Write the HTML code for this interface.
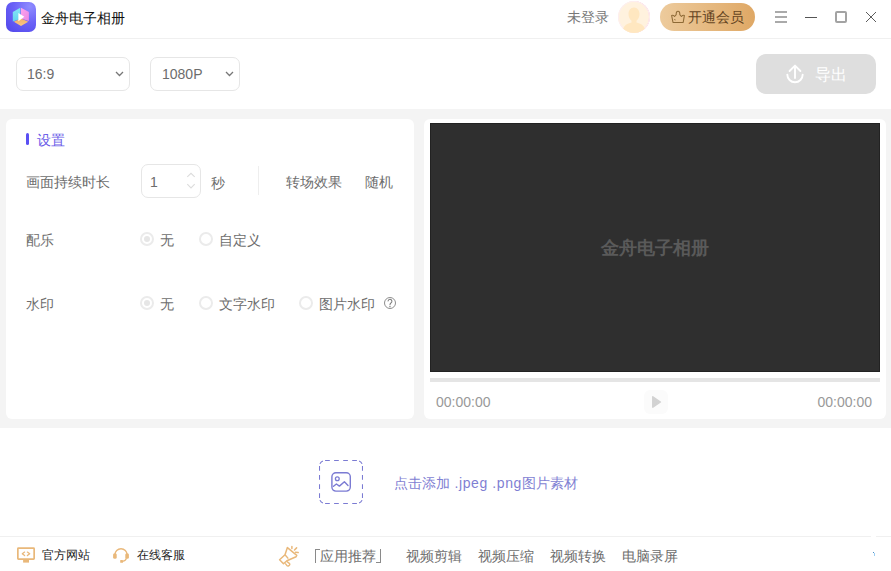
<!DOCTYPE html>
<html><head><meta charset="utf-8">
<style>
*{margin:0;padding:0;box-sizing:border-box}
html,body{width:891px;height:571px;overflow:hidden;background:#fff;font-family:"Liberation Sans",sans-serif;}
.a{position:absolute}
.t{position:absolute;white-space:nowrap;line-height:20px;font-size:14px;color:#6d6d6d}
</style></head><body>
<!-- header -->
<div class="a" style="left:0;top:0;width:891px;height:39px;border-bottom:1px solid #f0f0f0"></div>
<div class="a" style="left:6px;top:2px;width:30px;height:30px;border-radius:7px;background:radial-gradient(circle at 80% 15%,#8f8cff 0%,#6c63f7 45%,#4f45ea 100%)">
<svg width="30" height="30" viewBox="0 0 30 30" style="position:absolute;left:0;top:0">
<defs><linearGradient id="gc" x1="0" y1="0" x2="0" y2="1"><stop offset="0" stop-color="#86e6f6"/><stop offset="1" stop-color="#62d4ee"/></linearGradient>
<linearGradient id="gp" x1="0" y1="0" x2="1" y2="1"><stop offset="0" stop-color="#fca6ee"/><stop offset="1" stop-color="#ea86e4"/></linearGradient>
<linearGradient id="go" x1="0" y1="0" x2="0" y2="1"><stop offset="0" stop-color="#f3b268"/><stop offset="1" stop-color="#f8c585"/></linearGradient></defs>
<polygon points="6.8,10 14.3,5.8 14.3,17 6.8,19.5" fill="url(#gc)"/>
<polygon points="15,5.8 22.9,10 22.9,19 15,16.5" fill="url(#gp)"/>
<polygon points="7.8,19.8 15,16.6 22.3,19.8 15,24" fill="url(#go)"/>
<polygon points="12.4,11 12.4,19.2 18.3,14.8" fill="#fff"/>
</svg></div>
<div class="t" style="left:41px;top:8px;color:#111;font-weight:500">金舟电子相册</div>
<div class="t" style="left:567px;top:7px;color:#777">未登录</div>
<div class="a" style="left:618px;top:1px;width:32px;height:32px;border-radius:50%;background:#fff2de;overflow:hidden;box-shadow:inset 0 0 0 1px #fdeef0,inset -1px 0 0 #f7c6de">
<svg width="32" height="32" viewBox="0 0 32 32" style="position:absolute;left:0;top:0"><path d="M16,6.5 C12.5,6.5 10.5,9.5 10.5,13 C10.5,16 11.8,18.5 13.5,19.8 L13.5,21.5 C9,22.5 6,24.5 5,28 L5,32 L27,32 L27,28 C26,24.5 23,22.5 18.5,21.5 L18.5,19.8 C20.2,18.5 21.5,16 21.5,13 C21.5,9.5 19.5,6.5 16,6.5Z" fill="#ffe7c0"/></svg></div>
<div class="a" style="left:660px;top:3px;width:95px;height:28px;border-radius:14px;background:linear-gradient(90deg,#edcb9d,#dfa865)"></div>
<svg class="a" style="left:670px;top:10px" width="16" height="14" viewBox="0 0 16 14"><path d="M1.6,5.4 Q3.2,5 4.6,6.5 L6.2,4.6 Q6,1.3 8,1.3 Q10,1.3 9.8,4.6 L11.4,6.5 Q12.8,5 14.4,5.4 L13.2,12.4 L3,12.4 Z" fill="none" stroke="#8e6a36" stroke-width="1.05" stroke-linejoin="round"/><path d="M4.6,9 L5.2,10.3" stroke="#8a6630" stroke-width="0.9"/></svg>
<div class="t" style="left:688px;top:7px;color:#654522">开通会员</div>
<!-- window controls -->
<div class="a" style="left:775px;top:11px;width:12px;height:2px;background:#aaa"></div>
<div class="a" style="left:775px;top:16px;width:12px;height:2px;background:#aaa"></div>
<div class="a" style="left:775px;top:21px;width:12px;height:2px;background:#aaa"></div>
<div class="a" style="left:805px;top:17px;width:12px;height:1px;background:#555"></div>
<div class="a" style="left:835px;top:11px;width:12px;height:12px;border:2px solid #a3a3a3;border-radius:2px"></div>
<svg class="a" style="left:865px;top:11px" width="12" height="12" viewBox="0 0 12 12"><path d="M1,1 L11,11 M11,1 L1,11" stroke="#4a4a4a" stroke-width="0.9"/></svg>
<!-- toolbar -->
<div class="a" style="left:16px;top:57px;width:114px;height:34px;border:1px solid #e6e6e6;border-radius:7px"></div>
<div class="t" style="left:27px;top:64px;">16:9</div>
<svg class="a" style="left:115px;top:71px" width="9" height="6" viewBox="0 0 9 6"><path d="M1,1 L4.5,4.5 L8,1" fill="none" stroke="#777" stroke-width="1.3"/></svg>
<div class="a" style="left:150px;top:57px;width:90px;height:34px;border:1px solid #e6e6e6;border-radius:7px"></div>
<div class="t" style="left:162px;top:64px;">1080P</div>
<svg class="a" style="left:225px;top:71px" width="9" height="6" viewBox="0 0 9 6"><path d="M1,1 L4.5,4.5 L8,1" fill="none" stroke="#777" stroke-width="1.3"/></svg>
<div class="a" style="left:756px;top:54px;width:120px;height:40px;border-radius:10px;background:#dedede"></div>
<svg class="a" style="left:785px;top:64px" width="20" height="20" viewBox="0 0 20 20"><path d="M2.3,10.6 A7.7,7.7 0 0 0 17.7,10.6" fill="none" stroke="#fff" stroke-width="1.9" stroke-linecap="round"/><path d="M10,14 L10,1.8 M4.6,7 L10,1.6 L15.4,7" fill="none" stroke="#fff" stroke-width="1.9" stroke-linecap="round" stroke-linejoin="round"/></svg>
<div class="t" style="left:815px;top:65px;font-size:16px;color:#fff">导出</div>
<!-- gray -->
<div class="a" style="left:0;top:109px;width:891px;height:319px;background:#f4f4f4"></div>
<div class="a" style="left:6px;top:119px;width:408px;height:300px;background:#fff;border-radius:6px"></div>
<div class="a" style="left:424px;top:119px;width:462px;height:300px;background:#fff;border-radius:6px"></div>
<!-- settings -->
<div class="a" style="left:26px;top:133px;width:3px;height:12px;border-radius:2px;background:#5a4ff3"></div>
<div class="t" style="left:37px;top:130px;color:#6a5be8">设置</div>
<div class="t" style="left:26px;top:172px;">画面持续时长</div>
<div class="a" style="left:141px;top:164px;width:60px;height:34px;border:1px solid #e6e6e6;border-radius:7px"></div>
<div class="t" style="left:150px;top:172px;">1</div>
<svg class="a" style="left:186px;top:171px" width="11" height="20" viewBox="0 0 11 20"><path d="M1.3,5.8 L5,2.3 L8.7,5.8 M1.3,13.2 L5,17 L8.7,13.2" fill="none" stroke="#dcdcdc" stroke-width="1.1"/></svg>
<div class="t" style="left:211px;top:173px">秒</div>
<div class="a" style="left:258px;top:166px;width:1px;height:29px;background:#eee"></div>
<div class="t" style="left:286px;top:172px;">转场效果</div>
<div class="t" style="left:365px;top:172px;">随机</div>
<div class="t" style="left:26px;top:230px;">配乐</div>
<div class="t" style="left:26px;top:294px;">水印</div>
<!-- radios -->
<div class="a" style="left:140px;top:232px;width:14px;height:14px;border-radius:50%;border:2px solid #ebebeb"></div>
<div class="a" style="left:144px;top:236px;width:6px;height:6px;border-radius:50%;background:#e6e6e6"></div>
<div class="t" style="left:160px;top:230px;">无</div>
<div class="a" style="left:199px;top:232px;width:14px;height:14px;border-radius:50%;border:2px solid #ebebeb"></div>
<div class="t" style="left:219px;top:230px;">自定义</div>
<div class="a" style="left:140px;top:296px;width:14px;height:14px;border-radius:50%;border:2px solid #ebebeb"></div>
<div class="a" style="left:144px;top:300px;width:6px;height:6px;border-radius:50%;background:#e6e6e6"></div>
<div class="t" style="left:160px;top:294px;">无</div>
<div class="a" style="left:199px;top:296px;width:14px;height:14px;border-radius:50%;border:2px solid #ebebeb"></div>
<div class="t" style="left:219px;top:294px;">文字水印</div>
<div class="a" style="left:299px;top:296px;width:14px;height:14px;border-radius:50%;border:2px solid #ebebeb"></div>
<div class="t" style="left:319px;top:294px;">图片水印</div>
<svg class="a" style="left:384px;top:297px" width="12" height="12" viewBox="0 0 12 12"><circle cx="6" cy="6" r="5.5" fill="none" stroke="#8e8e8e" stroke-width="1"/><path d="M4.1,4.4 A1.9,1.9 0 1 1 7.1,5.8 Q5.9,6.6 5.9,8.2" fill="none" stroke="#7a7a7a" stroke-width="1.05"/><rect x="5.3" y="9.1" width="1.3" height="1.1" fill="#7a7a7a"/></svg>
<!-- video -->
<div class="a" style="left:430px;top:123px;width:450px;height:249px;background:#2f2f2f;border:1px solid #222"></div>
<div class="t" style="left:430px;width:450px;text-align:center;top:236px;font-size:18px;line-height:24px;font-weight:bold;color:#5a5a5a">金舟电子相册</div>
<div class="a" style="left:430px;top:378px;width:450px;height:4px;background:#e5e5e5"></div>
<div class="t" style="left:436px;top:392px;color:#999">00:00:00</div>
<div class="t" style="left:780px;width:92px;text-align:right;top:392px;color:#999">00:00:00</div>
<div class="a" style="left:644px;top:390px;width:24px;height:24px;border-radius:6px;background:#fbfbfb"></div>
<svg class="a" style="left:651px;top:395px" width="12" height="14" viewBox="0 0 12 14"><path d="M1.8,1.8 L9.4,7 L1.8,12.2Z" fill="#d2d2d2" stroke="#d2d2d2" stroke-width="1.5" stroke-linejoin="round"/></svg>
<!-- upload -->
<svg class="a" style="left:319px;top:460px" width="44" height="44" viewBox="0 0 44 44"><path d="M6.1,0.5H10.8M15.1,0.5H19.8M24.2,0.5H28.9M33.2,0.5H37.9 M6.1,43.5H10.8M15.1,43.5H19.8M24.2,43.5H28.9M33.2,43.5H37.9 M0.5,6.1V10.8M0.5,15.1V19.8M0.5,24.2V28.9M0.5,33.2V37.9 M43.5,6.1V10.8M43.5,15.1V19.8M43.5,24.2V28.9M43.5,33.2V37.9 M0.919,3.895A5.5,5.5 0 0 1 3.895,0.919 M40.105,0.919A5.5,5.5 0 0 1 43.081,3.895 M43.081,40.105A5.5,5.5 0 0 1 40.105,43.081 M3.895,43.081A5.5,5.5 0 0 1 0.919,40.105" fill="none" stroke="#7b7bd3" stroke-width="1.1"/></svg>
<svg class="a" style="left:330px;top:471px" width="22" height="22" viewBox="0 0 22 22"><rect x="1.9" y="1.7" width="18.4" height="18.4" rx="4" fill="none" stroke="#7b7bd3" stroke-width="1.4"/><circle cx="7.3" cy="7.8" r="1.9" fill="none" stroke="#7b7bd3" stroke-width="1.3"/><path d="M3.5,15.3 L6.4,13 L9.4,15.1 L14.4,10.75 L18,14.4" fill="none" stroke="#7b7bd3" stroke-width="1.4" stroke-linejoin="round" stroke-linecap="round"/></svg>
<div class="t" style="left:394px;top:473px;color:#7f7fd3">点击添加<span style="letter-spacing:0.6px"> .jpeg .png</span>图片素材</div>
<!-- footer -->
<div class="a" style="left:0;top:536px;width:891px;height:1px;background:#f0f0f0"></div>
<svg class="a" style="left:16px;top:546px" width="20" height="18" viewBox="0 0 20 18"><rect x="1.85" y="2.15" width="16.3" height="10.9" rx="0.6" fill="none" stroke="#e9b87a" stroke-width="1.7"/><rect x="7.1" y="13.5" width="5.9" height="3.1" fill="#e9b87a"/><path d="M8.6,6.1 L6.3,7.8 L8.6,9.6 M11.4,6.1 L13.7,7.8 L11.4,9.6" fill="none" stroke="#e9b87a" stroke-width="1.3" stroke-linecap="round" stroke-linejoin="round"/></svg>
<div class="t" style="left:42px;top:545px;font-size:12px;color:#222">官方网站</div>
<svg class="a" style="left:112px;top:546px" width="18" height="18" viewBox="0 0 18 18"><path d="M2.9,8.8 A6.1,6.1 0 0 1 15.1,8.8" fill="none" stroke="#e9b87a" stroke-width="1.35"/><rect x="1.1" y="7.3" width="3.6" height="5.4" rx="1.5" fill="#e9b87a"/><rect x="13.3" y="7.3" width="3.6" height="5.4" rx="1.5" fill="#e9b87a"/><path d="M14.4,12.2 Q13.9,14.9 10.6,15.3" fill="none" stroke="#e9b87a" stroke-width="1.2"/><rect x="8.2" y="14" width="2.8" height="2.8" rx="0.6" fill="#e9b87a"/></svg>
<div class="t" style="left:137px;top:545px;font-size:12px;color:#222">在线客服</div>
<svg class="a" style="left:274px;top:540px" width="30" height="30" viewBox="0 0 30 30"><path d="M13.4,7.6 L11,14.7 L5.6,19.7 L9.5,23.8 L12.9,20.8 L22.1,16.8 L22.8,15.3 Z" fill="none" stroke="#e9b87a" stroke-width="1.5" stroke-linejoin="round"/><path d="M11,14.7 L14.3,18.6" fill="none" stroke="#e9b87a" stroke-width="1.4"/><path d="M12.6,21.2 L15.6,23.6 Q16.2,24.6 15.2,25.4 L14.6,25.8 Q13.7,26.3 12.8,25.4 L11.2,23.3" fill="none" stroke="#e9b87a" stroke-width="1.4" stroke-linejoin="round"/><path d="M17.9,6.4 L17.9,8.5 M20.5,10 L22.6,7.9 M21.5,12.3 L24.2,12.6" fill="none" stroke="#e9b87a" stroke-width="1.5" stroke-linecap="round"/></svg>
<div class="t" style="left:320px;top:546px;">应用推荐</div>
<div class="a" style="left:315px;top:549px;width:5px;height:14px;border-left:1px solid #8a8a8a;border-top:1px solid #8a8a8a"></div>
<div class="a" style="left:376px;top:549px;width:5px;height:14px;border-right:1px solid #8a8a8a;border-bottom:1px solid #8a8a8a"></div>
<div class="t" style="left:406px;top:546px;">视频剪辑</div>
<div class="t" style="left:478px;top:546px;">视频压缩</div>
<div class="t" style="left:550px;top:546px;">视频转换</div>
<div class="t" style="left:622px;top:546px;">电脑录屏</div>
<div class="a" style="left:871px;top:536px;width:5px;height:1px;background:#fff"></div>
<div class="a" style="left:873px;top:552px;width:1px;height:1px;background:#4a90c8"></div>
<div class="a" style="left:874px;top:553px;width:1px;height:3px;background:#9ccff5"></div>
</body></html>
